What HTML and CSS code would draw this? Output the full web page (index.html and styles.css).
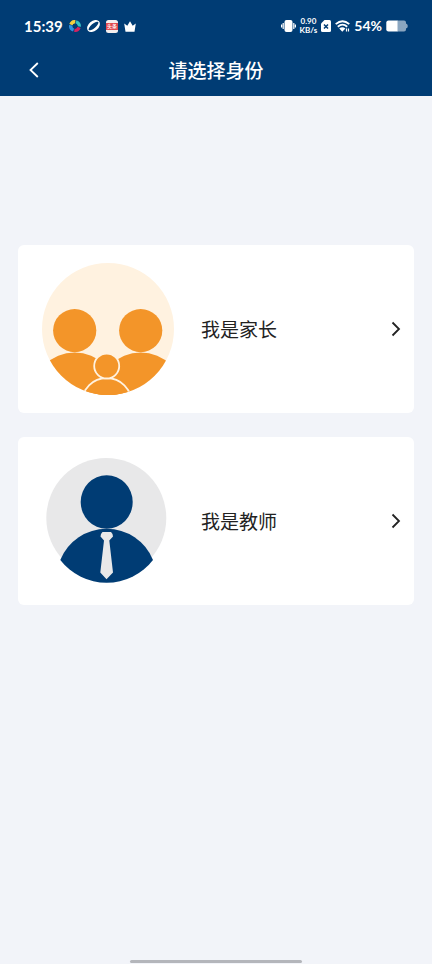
FILE: index.html
```html
<!DOCTYPE html>
<html lang="zh-CN">
<head>
<meta charset="utf-8">
<meta name="viewport" content="width=device-width, initial-scale=1">
<title>请选择身份</title>
<link rel="stylesheet" href="styles.css">
</head>
<body>
<header class="header">
  <div class="status">
    <div class="status-group status-left">
      <span class="clock">15:39</span>
      <svg width="12" height="12" viewBox="0 0 12 12" fill="none" stroke-width="3.4">
        <path stroke="#f3cf3e" d="M1.9 4.6A4.3 4.3 0 0 1 6.3 1.7"/>
        <path stroke="#35c3c4" d="M7 1.8A4.3 4.3 0 0 1 10.2 6.6"/>
        <path stroke="#d3235f" d="M10 7.4A4.3 4.3 0 0 1 5.4 10.2"/>
        <path stroke="#2f8fe0" d="M4.6 10A4.3 4.3 0 0 1 1.8 5.2"/>
        <path fill="#003c74" d="M4 4.2 7 3.4 8.8 6 7 8.8 4 8z"/>
      </svg>
      <svg width="13" height="12" viewBox="0 0 13 12">
        <g transform="rotate(-40 6.5 6)">
          <ellipse cx="6.5" cy="6" rx="7.2" ry="5" fill="#fff"/>
          <ellipse cx="6.5" cy="6" rx="6.2" ry="2.2" fill="#003c74"/>
        </g>
      </svg>
      <svg width="12" height="13" viewBox="0 0 12 13">
        <rect width="12" height="13" rx="2.5" fill="#f4eeee"/>
        <rect y="3" width="12" height="7" fill="#e04a50"/>
        <text class="app-label" x="6" y="8.4" text-anchor="middle">头条</text>
      </svg>
      <svg width="12" height="11" viewBox="0 0 12 11">
        <path fill="#fff" d="M.2 2.5 3.3 4.8 6 .2 8.7 4.8 11.8 2.5 10.5 10.8H1.5z"/>
      </svg>
    </div>
    <div class="status-group">
      <svg width="15" height="14" viewBox="0 0 15 14">
        <rect x="3.5" y="1" width="8" height="12" rx="2" fill="#fff"/>
        <path fill="none" stroke="#fff" stroke-width="1.2" d="M2.2 4v6M12.8 4v6M.6 5.5v3M14.4 5.5v3"/>
      </svg>
      <span class="speed"><span>0.90</span><span>KB/s</span></span>
      <svg width="10" height="12" viewBox="0 0 10 12">
        <path fill="#fff" d="M3.5 0H8.5Q10 0 10 1.5V10.5Q10 12 8.5 12H1.5Q0 12 0 10.5V3.5z"/>
        <path stroke="#003c74" stroke-width="1.5" d="M3 4.5 7 8.5M7 4.5 3 8.5"/>
      </svg>
      <svg width="15" height="12" viewBox="0 0 15 12">
        <path fill="none" stroke="#fff" stroke-width="1.8" d="M.7 4.2Q7.5-1.8 14.3 4.2M2.8 6.7Q7.5 2.6 12.2 6.7"/>
        <path fill="#fff" d="M4.2 8.6Q7.3 6 10.4 8.6L7.3 11.8z"/>
        <path stroke="#fff" stroke-width="1.2" d="M11.5 8.5v3M13.5 8.5v3"/>
      </svg>
      <span class="percent">54%</span>
      <svg width="22" height="12" viewBox="0 0 22 12">
        <path fill="#8ba6c0" d="M11 .5H18Q20 .5 20 2.5V3.5Q21.8 4 21.8 6T20 8.5V9.5Q20 11.5 18 11.5H11z"/>
        <path fill="#fff" d="M2.5.5H11.5V11.5H2.5Q.3 11.5.3 9.5V2.5Q.3.5 2.5.5z"/>
      </svg>
    </div>
  </div>
  <nav class="nav">
    <button class="back" type="button" aria-label="返回">
      <svg width="10" height="16" viewBox="0 0 10 16"><path fill="none" stroke="#fff" stroke-width="1.8" d="M8.8 1 1.5 8l7.3 7"/></svg>
    </button>
    <h1 class="title">请选择身份</h1>
  </nav>
</header>
<main class="choices">
  <a class="card" href="#parent">
    <svg class="avatar" viewBox="0 0 132 132">
      <clipPath id="disc"><circle cx="66" cy="66" r="66"/></clipPath>
      <g clip-path="url(#disc)">
        <rect width="132" height="132" fill="#fff2e0"/>
        <g fill="#f39529">
          <circle cx="32.7" cy="132.5" r="43"/>
          <circle cx="98.7" cy="132.5" r="43"/>
          <circle cx="32.7" cy="67.6" r="21.6"/>
          <circle cx="98.7" cy="67.6" r="21.6"/>
        </g>
        <g fill="#f39529" stroke="#fff2e0" stroke-width="1.8">
          <circle cx="64.7" cy="140" r="25"/>
          <circle cx="64.7" cy="103" r="12.5"/>
        </g>
      </g>
    </svg>
    <span class="label">我是家长</span>
    <svg class="arrow" viewBox="0 0 10 16"><path d="M1.5 1.5 8 8l-6.5 6.5"/></svg>
  </a>
  <a class="card" href="#teacher">
    <svg class="avatar" viewBox="0 0 132 132">
      <circle cx="64.3" cy="63" r="60" fill="#e8e8e9"/>
      <g fill="#003c74">
        <ellipse cx="64.7" cy="47" rx="26" ry="26.8"/>
        <path d="M18.3 105A50 50 0 0 1 111 105 58.5 58.5 0 0 1 18.3 105z"/>
      </g>
      <path fill="#e8e8e9" d="M60.5 77H69Q71 78.5 71 81.5L67.3 85.5 71 117.5 64.5 124.3 58.3 117.5 62 85.5 58.5 81.5Q58.5 78.5 60.5 77z"/>
    </svg>
    <span class="label">我是教师</span>
    <svg class="arrow" viewBox="0 0 10 16"><path d="M1.5 1.5 8 8l-6.5 6.5"/></svg>
  </a>
</main>
<footer class="home"><span class="home-bar"></span></footer>
</body>
</html>
```

FILE: styles.css
```css
* {
  box-sizing: border-box;
}

body {
  display: flex;
  flex-direction: column;
  min-height: 100vh;
  margin: 0;
  background: #f2f4f9;
  color: #222;
  font-family: "Noto Sans", "Noto Sans CJK SC", sans-serif;
}

svg {
  display: block;
  flex: none;
}

.header {
  padding: 4px 0;
  background: #003c74;
  color: #fff;
}

.status {
  display: flex;
  align-items: center;
  justify-content: space-between;
  height: 44px;
  padding: 0 24px;
}

.status-group {
  display: flex;
  align-items: center;
  gap: 4px;
}

.status-left {
  gap: 6px;
}

.clock {
  font: 700 15px/20px Lato, sans-serif;
}

.app-label {
  fill: #fff;
  font: 500 5px "Noto Sans CJK SC", sans-serif;
}

.speed {
  display: flex;
  flex-direction: column;
  align-items: center;
  font: 700 8px/9px Lato, sans-serif;
}

.percent {
  font: 700 14px/20px Lato, sans-serif;
}

.nav {
  display: grid;
  grid-template-columns: 44px 1fr 44px;
  align-items: center;
  height: 44px;
  padding: 0 12px;
}

.back {
  display: flex;
  align-items: center;
  justify-content: center;
  height: 44px;
  padding: 0;
  border: 0;
  background: none;
}

.title {
  margin: 0;
  font: 500 19px/28px "Noto Sans CJK SC", sans-serif;
  text-align: center;
}

.choices {
  display: flex;
  flex: 1;
  flex-direction: column;
  gap: 24px;
  padding: 149px 18px 24px;
}

.card {
  display: flex;
  align-items: center;
  gap: 27px;
  padding: 18px 13px 18px 24px;
  border-radius: 6px;
  background: #fff;
  color: #222;
  text-decoration: none;
}

.avatar {
  width: 132px;
  height: 132px;
}

.label {
  flex: 1;
  font: 400 19px/28px "Noto Sans CJK SC", sans-serif;
}

.arrow {
  width: 10px;
  height: 16px;
  fill: none;
  stroke: #222;
  stroke-width: 1.8px;
}

.home {
  display: flex;
  justify-content: center;
  padding-bottom: 1px;
}

.home-bar {
  width: 40%;
  height: 3px;
  border-radius: 2px;
  background: #b4b6bb;
}
```
